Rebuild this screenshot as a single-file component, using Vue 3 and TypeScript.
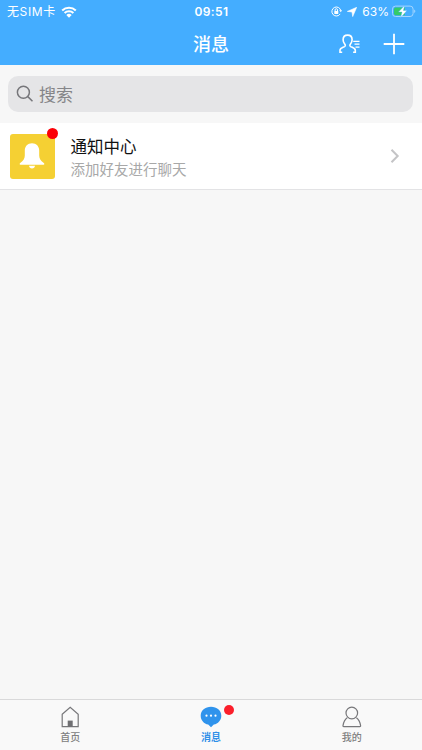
<script setup lang="ts">
import { ref } from 'vue'

interface Tab {
  key: string
  label: string
  badge: boolean
}

const tabs: Tab[] = [
  { key: 'home', label: '首页', badge: false },
  { key: 'message', label: '消息', badge: true },
  { key: 'mine', label: '我的', badge: false },
]
const active = ref('message')
const keyword = ref('')
</script>

<template>
  <div class="screen">
    <header class="header">
      <div class="status">
        <div class="status-left">
          <span class="carrier">无SIM卡</span>
          <svg class="wifi" width="16" height="12" viewBox="0 0 16 12">
            <path d="M1.2 4.5a9.8 9.8 0 0 1 13.6 0" />
            <path d="M3.6 7a6.3 6.3 0 0 1 8.8 0" />
            <path class="solid" d="M8 11.7 5.3 9a3.9 3.9 0 0 1 5.4 0z" />
          </svg>
        </div>
        <span class="time">09:51</span>
        <div class="status-right">
          <svg class="lock" width="11" height="11" viewBox="0 0 11 11">
            <path class="ring" d="M9.2 7.9A4.5 4.5 0 1 1 9.8 4.6" />
            <path class="solid" d="M8.2 4.2h2.8L9.8 6.3z" />
            <rect class="solid" x="3.3" y="4.9" width="4" height="3" rx=".4" />
            <path class="ring" d="M4.1 5V3.9a1.2 1.2 0 0 1 2.4 0V5" />
          </svg>
          <svg class="arrow" width="10" height="10" viewBox="0 0 10 10">
            <path d="M9.7.3 5.7 9.6 5 5 .3 4.4z" />
          </svg>
          <span class="percent">63%</span>
          <svg class="battery" width="24" height="13" viewBox="0 0 24 13">
            <rect class="shell" x=".5" y="1.1" width="20.6" height="10.4" rx="3" />
            <path class="charge" d="M3.6 2.5h9.2v7.7H3.6A1.7 1.7 0 0 1 2 8.500V4.200a1.700 1.700 0 0 1 1.600-1.700z" />
            <path class="nub" d="M22.200 4.600c1.500.7 1.500 2.800 0 3.500z" />
            <path class="bolt" d="M12.700.3 6.500 7.100h3.500L8.600 12.700 15 5.500h-3.600z" />
          </svg>
        </div>
      </div>
      <div class="nav">
        <h1 class="title">消息</h1>
        <div class="actions">
          <svg class="contacts" width="22" height="20" viewBox="0 0 22 20">
            <path d="M3.200 18.200H1v-2c0-2 3-2.800 4.600-3.600 1.100-.6.8-1.700.1-2.600-1-1.300-1.600-2.800-1.600-4.300 0-2.800 1.800-4.600 4.500-4.600s4.500 1.800 4.500 4.600c0 1.500-.6 3-1.600 4.300-.7.9-1 2 .1 2.600 1.600.8 4.700 1.600 4.700 3.600v2h-2.200" />
            <path class="lines" d="M14.200 7.300h6.300M15.500 10.200h5M16.500 13.100h4" />
          </svg>
          <svg class="plus" width="22" height="22" viewBox="0 0 22 22">
            <path d="M11 .7v20.600M.7 11h20.600" />
          </svg>
        </div>
      </div>
    </header>

    <div class="search-wrap">
      <label class="search">
        <svg width="18" height="18" viewBox="0 0 18 18">
          <circle cx="7.400" cy="7.300" r="6" />
          <path d="m11.800 11.600 4.700 4.600" />
        </svg>
        <input v-model="keyword" type="text" placeholder="搜索" />
      </label>
    </div>

    <main class="list">
      <article class="item">
        <div class="avatar">
          <svg width="26" height="26" viewBox="0 0 26 26">
            <path d="M13 .2c-4.400 0-7.200 3.200-7.200 7.400v5c0 3-1.300 5-4.600 7.400-.7.500-.9 1.800.3 1.800h23c1.200 0 1-1.300.3-1.800-3.300-2.400-4.600-4.400-4.600-7.400v-5c0-4.200-2.800-7.400-7.200-7.400z" />
            <path d="M10 22.700h6c-.3 1.700-1.400 2.800-3 2.800s-2.700-1.100-3-2.800z" />
          </svg>
          <i class="dot"></i>
        </div>
        <div class="info">
          <div class="name">通知中心</div>
          <div class="desc">添加好友进行聊天</div>
        </div>
        <svg class="chevron" width="10" height="16" viewBox="0 0 10 16">
          <path d="m1.500 1.700 6.200 6.300-6.200 6.300" />
        </svg>
      </article>
    </main>

    <nav class="tabbar">
      <div
        v-for="tab in tabs"
        :key="tab.key"
        class="tab"
        :class="{ active: tab.key === active }"
        @click="active = tab.key"
      >
        <div class="tab-icon">
          <svg v-if="tab.key === 'home'" width="22" height="22" viewBox="0 0 22 22">
            <path class="line" d="M3.200 8.300 11.200 1.400l8 6.900v12.300h-16z" />
            <path class="door" d="M8.700 14.600h5v6h-5z" />
          </svg>
          <svg v-else-if="tab.key === 'message'" width="22" height="22" viewBox="0 0 22 22">
            <path class="bubble" d="M11 .8c5.800 0 10.300 3.700 10.300 8.900 0 4.600-3.300 8.100-7.500 8.900L11 21.300l-2.800-2.700C4 17.800.7 14.300.7 9.700.7 4.500 5.200.8 11 .8z" />
            <circle class="pip" cx="6.500" cy="9.700" r="1.100" />
            <circle class="pip" cx="11" cy="9.700" r="1.100" />
            <circle class="pip" cx="15.500" cy="9.700" r="1.100" />
          </svg>
          <svg v-else width="22" height="22" viewBox="0 0 22 22">
            <circle class="line" cx="10.800" cy="7" r="5.800" />
            <path class="line" d="M6.200 11.800c-2 1.400-3.700 4.800-4.200 7.800-.1.700.2 1 .8 1h16c.6 0 .9-.3.800-1-.5-3-2.200-6.400-4.200-7.800" />
          </svg>
          <i v-if="tab.badge" class="dot"></i>
        </div>
        <span class="tab-label">{{ tab.label }}</span>
      </div>
    </nav>
  </div>
</template>

<style>
body {
  margin: 0;
  background: #f7f7f7;
}
</style>

<style scoped>
.screen {
  display: flex;
  flex-direction: column;
  height: 100vh;
  background: #f7f7f7;
  font-family: "Liberation Sans", "Noto Sans CJK SC", sans-serif;
  overflow: hidden;
}
svg {
  display: block;
  flex: none;
  fill: none;
}
.header {
  flex: none;
  height: 65px;
  background: #44adff;
  color: #fff;
}
.status {
  display: grid;
  grid-template-columns: 1fr auto 1fr;
  align-items: center;
  height: 22px;
  padding: 0 6px 0 7px;
  font-family: Inter, "Noto Sans CJK SC", sans-serif;
  font-size: 12px;
  line-height: 22px;
}
.status-left,
.status-right {
  display: flex;
  align-items: center;
}
.status-right {
  justify-content: flex-end;
}
.carrier {
  padding-top: 1px;
  letter-spacing: 0.6px;
}
.wifi {
  margin-left: 5px;
}
.wifi path {
  stroke: #fff;
  stroke-width: 2.1;
}
.wifi .solid {
  stroke: none;
}
.solid {
  fill: #fff;
}
.time {
  font-size: 12px;
  font-weight: 600;
  letter-spacing: 0.4px;
}
.ring {
  stroke: #fff;
  stroke-width: 1;
}
.arrow {
  margin: 0 5px 0 5px;
  fill: #fff;
  stroke: #fff;
  stroke-width: 0.6;
  stroke-linejoin: round;
}
.percent {
  letter-spacing: 0;
}
.battery {
  margin-left: 3px;
}
.shell {
  stroke: #a5d6ff;
}
.charge {
  fill: #35cb68;
}
.nub {
  fill: #a5d6ff;
}
.bolt {
  fill: #fff;
  stroke: #44adff;
  stroke-width: 0.4;
}
.nav {
  display: grid;
  grid-template-columns: 1fr auto 1fr;
  align-items: center;
  height: 43px;
  padding: 0 17px;
}
.title {
  grid-column: 2;
  margin: 0;
  padding-top: 3px;
  font-size: 18px;
  line-height: 40px;
  font-weight: 500;
}
.actions {
  display: flex;
  justify-content: flex-end;
  align-items: center;
  gap: 22px;
}
.contacts {
  stroke: #fff;
  stroke-width: 1.6;
}
.contacts .lines {
  stroke-width: 1.2;
}
.plus {
  stroke: #fff;
  stroke-width: 1.8;
}
.search-wrap {
  flex: none;
  height: 58px;
  box-sizing: border-box;
  padding: 11px 9px 11px 8px;
}
.search {
  display: flex;
  align-items: center;
  gap: 5px;
  height: 36px;
  padding: 0 8px;
  border-radius: 10px;
  background: #e5e5e7;
}
.search svg {
  stroke: #76767a;
  stroke-width: 1.5;
}
.search input {
  flex: 1;
  min-width: 0;
  padding: 3px 0 0;
  border: 0;
  outline: 0;
  background: none;
  font: inherit;
  font-size: 17px;
  color: #333;
}
.search input::placeholder {
  color: #858589;
  opacity: 1;
}
.list {
  flex: 1;
}
.item {
  display: flex;
  align-items: center;
  box-sizing: border-box;
  height: 67px;
  padding: 0 22px 0 9.5px;
  background: #fff;
  border-bottom: 1px solid #e3e3e5;
}
.avatar {
  position: relative;
  display: flex;
  align-items: center;
  justify-content: center;
  width: 45px;
  height: 45px;
  border-radius: 3px;
  background: #f5d033;
}
.avatar svg {
  fill: #fff;
}
.dot {
  position: absolute;
  border-radius: 50%;
}
.avatar .dot {
  top: -6px;
  right: -3px;
  width: 11px;
  height: 11px;
  background: #fb0007;
}
.info {
  flex: 1;
  margin-left: 16px;
  padding-top: 4px;
}
.name {
  font-size: 16.5px;
  line-height: 24px;
  color: #111;
}
.desc {
  font-size: 14.5px;
  line-height: 22px;
  color: #a8a8a8;
}
.chevron {
  stroke: #c4c4c6;
  stroke-width: 2;
}
.tabbar {
  flex: none;
  display: flex;
  box-sizing: border-box;
  height: 51px;
  border-top: 1px solid #d9d9da;
  background: #f9f9f9;
}
.tab {
  flex: 1;
  display: flex;
  flex-direction: column;
  align-items: center;
  padding-top: 6px;
  color: #808080;
}
.tab.active {
  color: #2f8fe8;
}
.tab-icon {
  position: relative;
}
.tab-icon .dot {
  top: -1px;
  right: -12px;
  width: 10px;
  height: 10px;
  background: #fb1f2b;
}
.line {
  stroke: #77777a;
  stroke-width: 1.2;
}
.door {
  fill: #6f6f72;
}
.bubble {
  fill: #2f93ec;
}
.pip {
  fill: #fff;
}
.tab-label {
  margin-top: 2px;
  font-size: 10px;
  line-height: 15px;
  font-weight: 500;
}
.active .tab-label {
  font-weight: 700;
}
</style>
